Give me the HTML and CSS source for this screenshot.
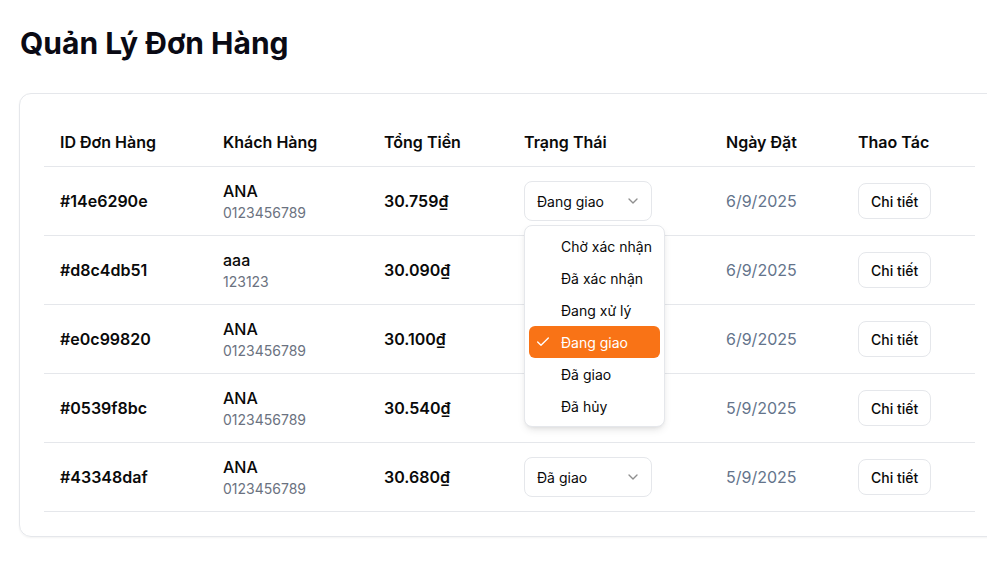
FILE: index.html
```html
<!DOCTYPE html>
<html lang="vi">
<head>
<meta charset="utf-8">
<title>Quản Lý Đơn Hàng</title>
<link rel="stylesheet" href="styles.css">
</head>
<body>
<main class="page">
  <h1 class="title">Quản Lý Đơn Hàng</h1>
  <div class="card">
    <table class="orders">
      <colgroup>
        <col style="width:163px"><col style="width:161px"><col style="width:140px"><col style="width:202px"><col style="width:132px"><col style="width:133px">
      </colgroup>
      <thead>
        <tr><th>ID Đơn Hàng</th><th>Khách Hàng</th><th>Tổng Tiền</th><th>Trạng Thái</th><th>Ngày Đặt</th><th>Thao Tác</th></tr>
      </thead>
      <tbody>
        <tr>
          <td class="id">#14e6290e</td>
          <td><div class="name">ANA</div><div class="phone">0123456789</div></td>
          <td class="total">30.759₫</td>
          <td class="status-cell">
            <div class="select"><span>Đang giao</span><svg class="chev" viewBox="0 0 24 24" width="16" height="16"><path d="m6 9 6 6 6-6"/></svg></div>
            <div class="menu">
              <div class="item">Chờ xác nhận</div>
              <div class="item">Đã xác nhận</div>
              <div class="item">Đang xử lý</div>
              <div class="item active"><svg class="check" viewBox="0 0 24 24" width="16" height="16"><path d="M20 6 9 17l-5-5"/></svg>Đang giao</div>
              <div class="item">Đã giao</div>
              <div class="item">Đã hủy</div>
            </div>
          </td>
          <td class="date">6/9/2025</td>
          <td><button class="btn">Chi tiết</button></td>
        </tr>
        <tr>
          <td class="id">#d8c4db51</td>
          <td><div class="name">aaa</div><div class="phone">123123</div></td>
          <td class="total">30.090₫</td>
          <td class="status-cell"><div class="select covered"><span>Đang giao</span><svg class="chev" viewBox="0 0 24 24" width="16" height="16"><path d="m6 9 6 6 6-6"/></svg></div></td>
          <td class="date">6/9/2025</td>
          <td><button class="btn">Chi tiết</button></td>
        </tr>
        <tr>
          <td class="id">#e0c99820</td>
          <td><div class="name">ANA</div><div class="phone">0123456789</div></td>
          <td class="total">30.100₫</td>
          <td class="status-cell"><div class="select covered"><span>Đang giao</span><svg class="chev" viewBox="0 0 24 24" width="16" height="16"><path d="m6 9 6 6 6-6"/></svg></div></td>
          <td class="date">6/9/2025</td>
          <td><button class="btn">Chi tiết</button></td>
        </tr>
        <tr>
          <td class="id">#0539f8bc</td>
          <td><div class="name">ANA</div><div class="phone">0123456789</div></td>
          <td class="total">30.540₫</td>
          <td class="status-cell"><div class="select covered"><span>Đã giao</span><svg class="chev" viewBox="0 0 24 24" width="16" height="16"><path d="m6 9 6 6 6-6"/></svg></div></td>
          <td class="date">5/9/2025</td>
          <td><button class="btn">Chi tiết</button></td>
        </tr>
        <tr>
          <td class="id">#43348daf</td>
          <td><div class="name">ANA</div><div class="phone">0123456789</div></td>
          <td class="total">30.680₫</td>
          <td class="status-cell"><div class="select"><span>Đã giao</span><svg class="chev" viewBox="0 0 24 24" width="16" height="16"><path d="m6 9 6 6 6-6"/></svg></div></td>
          <td class="date">5/9/2025</td>
          <td><button class="btn">Chi tiết</button></td>
        </tr>
      </tbody>
    </table>
  </div>
</main>
</body>
</html>
```

FILE: styles.css
```css
html, body {
  margin: 0;
  padding: 0;
  overflow: hidden;
  background: #ffffff;
}
body {
  font-family: Inter, "Noto Sans", sans-serif;
  color: #0a0a0a;
}
.page {
  padding: 25px 19px 24px;
}
.title {
  margin: 0 0 32px;
  padding-left: 1px;
  font-size: 30px;
  line-height: 36px;
  font-weight: 700;
  color: #0a0a14;
}
.card {
  width: 931px;
  padding: 24px;
  border: 1px solid #e5e7eb;
  border-radius: 12px;
  box-shadow: 0 1px 2px rgba(0,0,0,0.05);
}
.orders {
  width: 931px;
  table-layout: fixed;
  border-collapse: collapse;
}
.orders th {
  height: 48px;
  padding: 0 16px;
  text-align: left;
  font-size: 16px;
  font-weight: 600;
  color: #0a0a0a;
  border-bottom: 1px solid #e5e7eb;
}
.orders td {
  height: 68px;
  padding: 0 16px;
  font-size: 16px;
  border-bottom: 1px solid #e5e7eb;
  vertical-align: middle;
}
.id, .total {
  font-weight: 600;
}
.name {
  font-weight: 500;
  line-height: 24px;
}
.phone {
  font-size: 14px;
  line-height: 20px;
  color: #6b7280;
}
.date {
  color: #64748b;
}
.status-cell {
  position: relative;
}
.select {
  box-sizing: border-box;
  width: 128px;
  height: 40px;
  border: 1px solid #e5e7eb;
  border-radius: 8px;
  padding: 0 12px;
  display: flex;
  align-items: center;
  justify-content: space-between;
  font-size: 14px;
  background: #fff;
}
.select.covered {
  visibility: hidden;
}
.chev {
  fill: none;
  stroke: #0a0a0a;
  stroke-width: 2;
  stroke-linecap: round;
  stroke-linejoin: round;
  opacity: 0.45;
  margin-right: -2px;
}
.menu {
  position: absolute;
  left: 16px;
  top: 58px;
  z-index: 10;
  width: 141px;
  box-sizing: border-box;
  padding: 4px;
  background: #fff;
  border: 1px solid #e5e7eb;
  border-radius: 8px;
  box-shadow: 0 4px 8px -2px rgba(0,0,0,0.12), 0 2px 4px -2px rgba(0,0,0,0.08);
}
.item {
  height: 32px;
  display: flex;
  align-items: center;
  padding-left: 32px;
  font-size: 14px;
  color: #0a0a0a;
  border-radius: 6px;
  position: relative;
}
.item.active {
  background: #f97316;
  color: #ffffff;
}
.check {
  position: absolute;
  left: 6px;
  top: 8px;
  fill: none;
  stroke: #ffffff;
  stroke-width: 2;
  stroke-linecap: round;
  stroke-linejoin: round;
}
.btn {
  font-family: inherit;
  font-size: 14px;
  font-weight: 500;
  color: #0a0a0a;
  background: #fff;
  border: 1px solid #e5e7eb;
  border-radius: 8px;
  height: 36px;
  padding: 0 12px;
}
```
